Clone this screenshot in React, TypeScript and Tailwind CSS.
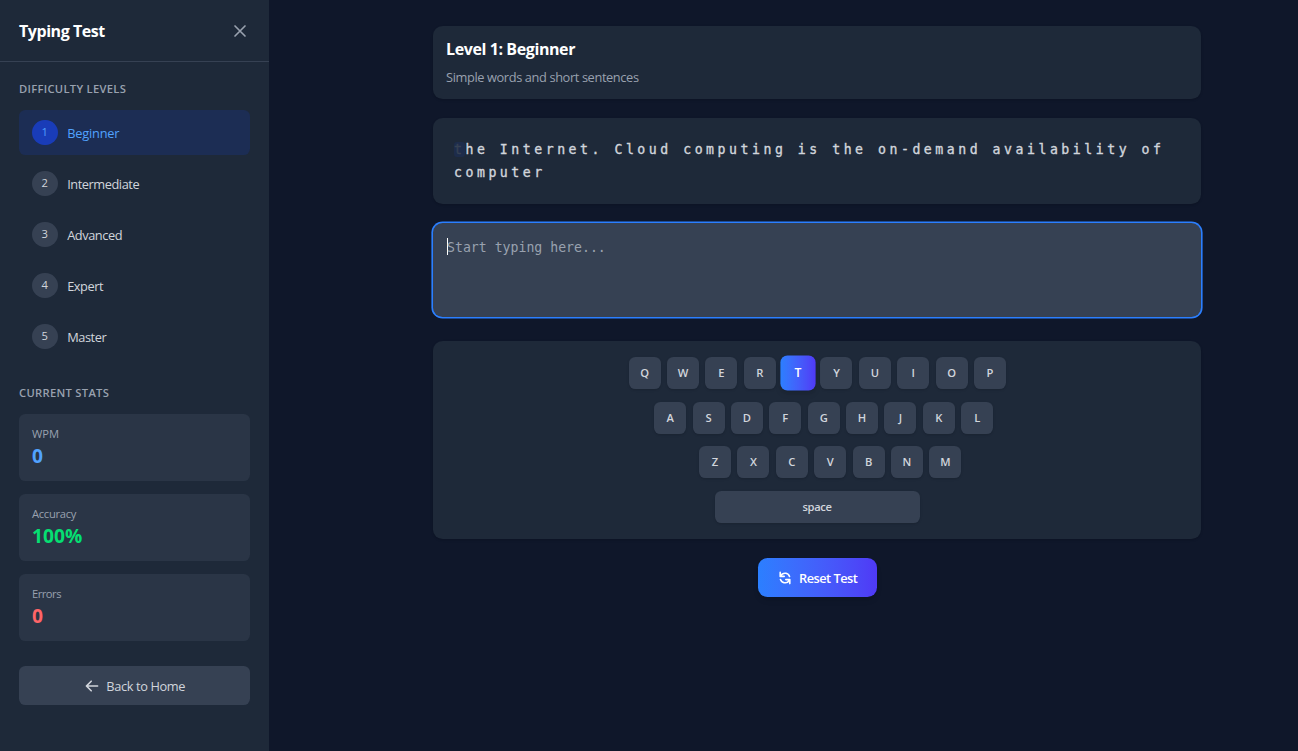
import { HiArrowLeft, HiOutlineX, HiRefresh } from "react-icons/hi";

const levels = ["Beginner", "Intermediate", "Advanced", "Expert", "Master"];

const stats = [
  { label: "WPM", value: "0", color: "text-[#51a2ff]", tracking: "" },
  { label: "Accuracy", value: "100%", color: "text-[#05df72]", tracking: "tracking-[-0.3px]" },
  { label: "Errors", value: "0", color: "text-[#ff6467]", tracking: "tracking-[-0.5px]" },
];

const rows = [
  { keys: "QWERTYUIOP", pad: "pl-[0.6px]" },
  { keys: "ASDFGHJKL", pad: "pl-[13.4px]" },
  { keys: "ZXCVBNM", pad: "pl-[26.4px]" },
];

const sample = "he Internet. Cloud computing is the on-demand availability of computer";

function Heading({ children }: { children: string }) {
  return <h3 className="text-[11.2px] leading-4 font-semibold tracking-[0.3px] text-[#99a1af] uppercase">{children}</h3>;
}

export default function App() {
  return (
    <div className="flex h-[751px] w-full overflow-hidden bg-[#0f172a] font-['Open_Sans','Noto_Sans',sans-serif]">
      <aside className="flex w-[269px] shrink-0 flex-col bg-[#1e2939]">
        <header className="flex h-[62px] items-center justify-between border-b border-[#364153] px-[19px]">
          <h1 className="text-[16px] font-bold tracking-[-0.45px] text-white">Typing Test</h1>
          <HiOutlineX className="mr-[0.4px] h-5 w-5 text-[#99a1af]" />
        </header>
        <div className="flex flex-col px-[19px] pt-[19px]">
          <Heading>Difficulty Levels</Heading>
          <ul className="mt-[13px] flex flex-col gap-[6.2px]">
            {levels.map((name, i) => (
              <li
                key={name}
                className={
                  i === 0
                    ? "flex h-[44.8px] items-center rounded-[6.4px] bg-[#1c2d54] px-[13px] text-[#51a2ff]"
                    : "flex h-[44.8px] items-center rounded-[6.4px] px-[13px] text-[#d1d5dc]"
                }
              >
                <span
                  className={
                    i === 0
                      ? "flex size-[25.6px] items-center justify-center rounded-full bg-[#193cb8] text-[11.2px] font-medium"
                      : "flex size-[25.6px] items-center justify-center rounded-full bg-[#364153] text-[11.2px] font-medium"
                  }
                >
                  {i + 1}
                </span>
                <span
                  className={
                    i === 0
                      ? "ml-[9.6px] pt-[2px] text-[12.8px] font-medium tracking-[-0.2px]"
                      : "ml-[9.6px] pt-[2px] text-[12.8px] font-medium tracking-[-0.45px]"
                  }
                >
                  {name}
                </span>
              </li>
            ))}
          </ul>
          <div className="mt-[26px]">
            <Heading>Current Stats</Heading>
          </div>
          <div className="mt-[13px] flex flex-col gap-[13px]">
            {stats.map((s) => (
              <div key={s.label} className="flex h-[67px] flex-col rounded-[6.4px] bg-[#2a3546] px-[13px] pt-[12px]">
                <span className={`text-[11.2px] leading-4 text-[#99a1af] ${s.tracking}`}>{s.label}</span>
                <span className={`text-[19.2px] leading-[27px] font-bold ${s.color}`}>{s.value}</span>
              </div>
            ))}
          </div>
          <button className="mt-[25px] flex h-[39px] items-center justify-center gap-[6.4px] rounded-[6.4px] bg-[#364153] pt-px text-[12.8px] font-medium text-[#d1d5dc]">
            <HiArrowLeft className="h-4 w-4" />
            <span className="pt-px tracking-[-0.38px]">Back to Home</span>
          </button>
        </div>
      </aside>

      <main className="flex flex-1 flex-col items-center pr-px pt-[26px] pl-[68px]">
        <div className="flex w-[768px] flex-col">
          <section className="h-[73px] rounded-[9.6px] bg-[#1e2939] px-[13px] pt-[12px] shadow-sm">
            <h2 className="text-[16px] leading-[22px] font-bold tracking-[-0.4px] text-white">Level 1: Beginner</h2>
            <p className="mt-[7px] text-[12.8px] leading-5 tracking-[-0.38px] text-[#99a1af]">Simple words and short sentences</p>
          </section>
          <section className="mt-[19px] h-[86px] rounded-[9.6px] bg-[#1e2939] px-[19px] pt-[20px] font-['DejaVu_Sans_Mono',monospace] text-[13.2px] leading-[23px] tracking-[3.52px] text-[#d1d5dc] shadow-sm [-webkit-text-stroke:0.35px_currentColor]">
            <p className="pl-[2px]">
              <span className="rounded-[3px] bg-[#1d2c4b] text-[#364153]">t</span>
              {sample}
            </p>
          </section>
          <section className="mt-[19px] flex h-[94px] rounded-[9.6px] bg-[#364153] px-[14px] pt-[15px] ring-[1.6px] ring-[#2b7fff]">
            <span className="h-[17px] w-px bg-white" />
            <span className="-ml-px h-5 font-['DejaVu_Sans_Mono',monospace] text-[13.2px] leading-5 text-[#99a1af]">Start typing here...</span>
          </section>
          <section className="mt-[24px] flex h-[198px] flex-col items-center gap-[12.6px] rounded-[9.6px] bg-[#1e2939] pt-[16px] shadow-sm">
            {rows.map((row) => (
              <div key={row.keys} className={`flex gap-[6.4px] ${row.pad}`}>
                {row.keys.split("").map((k) => (
                  <kbd
                    key={k}
                    className={
                      k === "T"
                        ? "flex size-8 scale-110 items-center justify-center rounded-[6.4px] bg-linear-to-r from-[#2b7fff] to-[#4f39f6] font-['Open_Sans',sans-serif] text-[11.2px] font-semibold text-white shadow-md"
                        : "flex size-8 items-center justify-center rounded-[6.4px] bg-[#364153] pt-px font-['Open_Sans',sans-serif] text-[11.2px] font-semibold text-[#d1d5dc] shadow"
                    }
                  >
                    {k}
                  </kbd>
                ))}
              </div>
            ))}
            <kbd className="flex h-8 w-[205px] items-center justify-center rounded-[6.4px] bg-[#364153] pt-px font-['Open_Sans',sans-serif] text-[11.2px] font-semibold tracking-[-0.4px] text-[#d1d5dc] shadow">
              space
            </kbd>
          </section>
          <button className="mt-[19px] flex h-[39px] w-[119px] items-center justify-center gap-[6.4px] self-center rounded-[9.6px] bg-linear-to-r from-[#2b7fff] to-[#4f39f6] text-[12.8px] font-semibold text-white shadow-md">
            <HiRefresh className="h-4 w-4" />
            <span className="pt-[2px] tracking-[-0.5px] whitespace-nowrap">Reset Test</span>
          </button>
        </div>
      </main>
    </div>
  );
}
